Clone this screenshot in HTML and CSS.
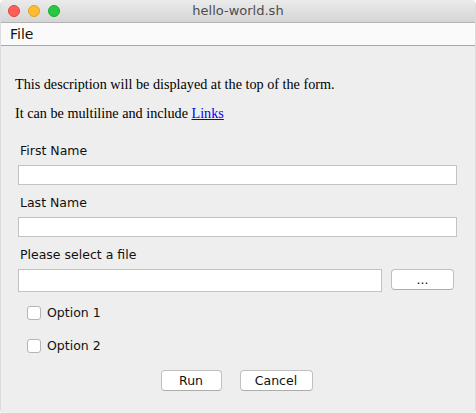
FILE: index.html
```html
<!DOCTYPE html>
<html>
<head>
<meta charset="utf-8">
<link rel="stylesheet" href="styles.css">
</head>
<body>
<div class="window">
  <div class="titlebar">
    <div class="lights">
      <span class="light red"></span>
      <span class="light yellow"></span>
      <span class="light green"></span>
    </div>
    <div class="title">hello-world.sh</div>
  </div>
  <div class="menubar"><span class="menu">File</span></div>
  <div class="content">
    <p class="desc first">This description will be displayed at the top of the form.</p>
    <p class="desc second">It can be multiline and include <a href="#">Links</a></p>
    <div class="field">
      <div class="label top">First Name</div>
      <div class="input"></div>
    </div>
    <div class="field">
      <div class="label">Last Name</div>
      <div class="input"></div>
    </div>
    <div class="field">
      <div class="label">Please select a file</div>
      <div class="filerow">
        <div class="input file"></div>
        <div class="btn browse">...</div>
      </div>
    </div>
    <div class="checks">
      <label class="check"><span class="box"></span><span>Option 1</span></label>
      <label class="check"><span class="box"></span><span>Option 2</span></label>
    </div>
    <div class="buttons">
      <div class="btn run">Run</div>
      <div class="btn cancel">Cancel</div>
    </div>
  </div>
</div>
</body>
</html>
```

FILE: styles.css
```css
html, body {
  margin: 0;
  padding: 0;
  background: #ffffff;
}
.window {
  width: 476px;
  height: 413px;
  background: #eeeeee;
  border-radius: 5px 5px 4px 4px;
  overflow: hidden;
  display: flex;
  flex-direction: column;
  box-sizing: border-box;
  border-left: 1px solid #dcdcdc;
  border-right: 1px solid #dcdcdc;
  font-family: "DejaVu Sans", sans-serif;
}
.titlebar {
  height: 22px;
  flex: none;
  background: linear-gradient(#ebebeb, #d5d5d5);
  border-bottom: 1px solid #b3b3b3;
  display: flex;
  align-items: center;
  position: relative;
}
.lights {
  display: flex;
  gap: 8px;
  padding-left: 7px;
}
.light {
  width: 12px;
  height: 12px;
  border-radius: 50%;
  box-sizing: border-box;
}
.red { background: #fe5f57; border: 1px solid #e0443e; }
.yellow { background: #febc2e; border: 1px solid #dea123; }
.green { background: #28c840; border: 1px solid #1aab29; }
.title {
  position: absolute;
  left: 0;
  right: 0;
  top: 0;
  line-height: 22px;
  text-align: center;
  font-size: 13px;
  color: #4d4d4d;
}
.menubar {
  height: 22px;
  flex: none;
  background: #fafafa;
  border-bottom: 1px solid #a8a8a8;
  display: flex;
  align-items: center;
  padding-left: 9px;
}
.menu {
  font-size: 14px;
  color: #111;
}
.content {
  padding: 0 18px 0 17px;
}
.desc {
  margin: 0;
  font-family: "Liberation Serif", serif;
  font-size: 14.2px;
  line-height: 16px;
  color: #000;
  margin-left: -3px;
}
.desc.first { margin-top: 30px; }
.desc.second { margin-top: 13px; }
.desc a { color: #0000ee; text-decoration: underline; }
.label {
  font-size: 12.5px;
  line-height: 16px;
  color: #111;
  padding-left: 2px;
  margin-top: 10px;
  margin-bottom: 6px;
}
.label.top { margin-top: 22px; }
.input {
  height: 20px;
  background: #fff;
  border: 1px solid #c3c3c3;
  box-sizing: border-box;
}
.filerow {
  display: flex;
  align-items: flex-start;
  gap: 9px;
}
.input.file {
  flex: 1;
  height: 23px;
}
.btn {
  height: 21px;
  box-sizing: border-box;
  background: #fff;
  border: 1px solid #c0c0c0;
  border-bottom-color: #acacac;
  border-radius: 4px;
  font-size: 12.5px;
  color: #111;
  display: flex;
  align-items: center;
  justify-content: center;
}
.browse { width: 63px; margin-right: 3px; }
.checks {
  display: flex;
  flex-direction: column;
  gap: 19px;
  margin-top: 14px;
  padding-left: 9px;
}
.check {
  display: flex;
  align-items: center;
  gap: 6px;
  font-size: 12.5px;
  color: #111;
  line-height: 14px;
}
.box {
  width: 14px;
  height: 14px;
  box-sizing: border-box;
  background: #fff;
  border: 1px solid #b5b5b5;
  border-radius: 3px;
}
.buttons {
  display: flex;
  justify-content: center;
  gap: 18px;
  margin-top: 17px;
  padding-right: 2px;
}
.run { width: 61px; }
.cancel { width: 73px; }
```
